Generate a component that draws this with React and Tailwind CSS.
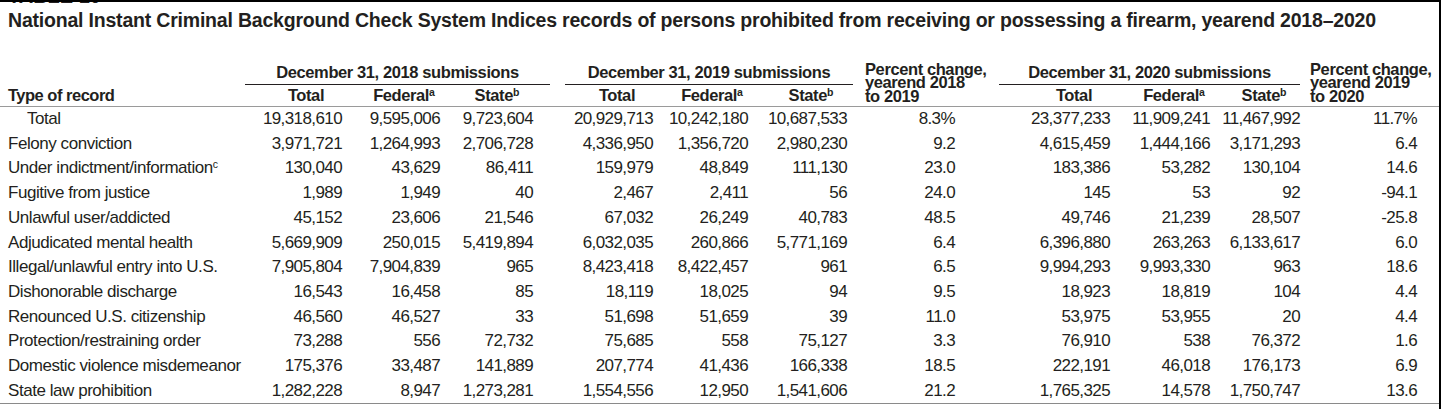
import React from 'react';

// Data rows: label, 2018 (total, federal, state), 2019 (...), % 2018-19, 2020 (...), % 2019-20
const ROWS = [
  ['Total', '19,318,610', '9,595,006', '9,723,604', '20,929,713', '10,242,180', '10,687,533', '8.3%', '23,377,233', '11,909,241', '11,467,992', '11.7%'],
  ['Felony conviction', '3,971,721', '1,264,993', '2,706,728', '4,336,950', '1,356,720', '2,980,230', '9.2', '4,615,459', '1,444,166', '3,171,293', '6.4'],
  ['Under indictment/information', '130,040', '43,629', '86,411', '159,979', '48,849', '111,130', '23.0', '183,386', '53,282', '130,104', '14.6'],
  ['Fugitive from justice', '1,989', '1,949', '40', '2,467', '2,411', '56', '24.0', '145', '53', '92', '-94.1'],
  ['Unlawful user/addicted', '45,152', '23,606', '21,546', '67,032', '26,249', '40,783', '48.5', '49,746', '21,239', '28,507', '-25.8'],
  ['Adjudicated mental health', '5,669,909', '250,015', '5,419,894', '6,032,035', '260,866', '5,771,169', '6.4', '6,396,880', '263,263', '6,133,617', '6.0'],
  ['Illegal/unlawful entry into U.S.', '7,905,804', '7,904,839', '965', '8,423,418', '8,422,457', '961', '6.5', '9,994,293', '9,993,330', '963', '18.6'],
  ['Dishonorable discharge', '16,543', '16,458', '85', '18,119', '18,025', '94', '9.5', '18,923', '18,819', '104', '4.4'],
  ['Renounced U.S. citizenship', '46,560', '46,527', '33', '51,698', '51,659', '39', '11.0', '53,975', '53,955', '20', '4.4'],
  ['Protection/restraining order', '73,288', '556', '72,732', '75,685', '558', '75,127', '3.3', '76,910', '538', '76,372', '1.6'],
  ['Domestic violence misdemeanor', '175,376', '33,487', '141,889', '207,774', '41,436', '166,338', '18.5', '222,191', '46,018', '176,173', '6.9'],
  ['State law prohibition', '1,282,228', '8,947', '1,273,281', '1,554,556', '12,950', '1,541,606', '21.2', '1,765,325', '14,578', '1,750,747', '13.6'],
];

const GRID = 'grid grid-cols-[245px_97px_98px_93px_120px_95px_99px_108px_155px_100px_90px_117px]';

function ColHead({ children, sup }) {
  return (
    <div className="flex justify-end">
      <div className="w-[72px] flex justify-center whitespace-nowrap">
        <span>
          {children}
          {sup && <sup className="text-[10.5px] font-bold tracking-normal">{sup}</sup>}
        </span>
      </div>
    </div>
  );
}

function PctHead({ from, to, className }) {
  return (
    <div className={`row-span-2 self-end whitespace-nowrap leading-[13.5px] pb-[3px] ${className}`}>
      <div>Percent change,</div>
      <div>yearend {from}</div>
      <div>to {to}</div>
    </div>
  );
}

export default function App() {
  return (
    <div className="w-[1441px] h-[409px] overflow-hidden bg-white border-t-2 border-r-2 border-black text-[#231f20] font-['Liberation_Sans',Arial,sans-serif]">
      {/* table number, cut off at the top */}
      <div className="h-[5px] overflow-hidden pl-2">
        <div className="-mt-[16px] text-[20px] leading-[20px] font-bold">TABLE 10</div>
      </div>

      <h1 className="mt-[1px] pl-2 text-[19.5px] leading-[24px] font-bold tracking-[-0.2px] whitespace-nowrap">
        National Instant Criminal Background Check System Indices records of persons prohibited from receiving or possessing a firearm, yearend 2018–2020
      </h1>

      {/* header */}
      <div className="mt-[30px] border-b border-[#9a9a9a]">
        <div className={`${GRID} text-[16.5px] leading-[20px] font-bold tracking-[-0.4px]`}>
          <div />
          <div className="col-span-3 mr-[-17px] pb-[2px] border-b border-[#231f20] text-center whitespace-nowrap">
            December 31, 2018 submissions
          </div>
          <div className="col-span-3 ml-[32px] mr-[-6px] pb-[2px] border-b border-[#231f20] text-center whitespace-nowrap">
            December 31, 2019 submissions
          </div>
          <PctHead from="2018" to="2019" className="pl-[18px]" />
          <div className="col-span-3 ml-[44px] pb-[2px] border-b border-[#231f20] text-center whitespace-nowrap">
            December 31, 2020 submissions
          </div>
          <PctHead from="2019" to="2020" className="pl-[10px] -mr-[22px]" />

          <div className="pl-2 pb-[1px] whitespace-nowrap tracking-[-0.5px]">Type of record</div>
          <ColHead>Total</ColHead>
          <ColHead sup="a">Federal</ColHead>
          <ColHead sup="b">State</ColHead>
          <ColHead>Total</ColHead>
          <ColHead sup="a">Federal</ColHead>
          <ColHead sup="b">State</ColHead>
          <ColHead>Total</ColHead>
          <ColHead sup="a">Federal</ColHead>
          <ColHead sup="b">State</ColHead>
        </div>
      </div>

      {/* body */}
      <div className="border-b border-[#8a8a8a] text-[17px] leading-[24.7px]">
        {ROWS.map((row, i) => (
          <div key={row[0]} className={GRID}>
            <div className={`whitespace-nowrap tracking-[-0.45px] ${i === 0 ? 'pl-[27px]' : 'pl-2'}`}>
              {row[0]}
              {i === 2 && <sup className="text-[10.5px] tracking-normal">c</sup>}
            </div>
            {row.slice(1).map((v, j) => (
              <div key={j} className="text-right whitespace-nowrap tracking-[-0.6px]">{v}</div>
            ))}
          </div>
        ))}
      </div>
    </div>
  );
}
